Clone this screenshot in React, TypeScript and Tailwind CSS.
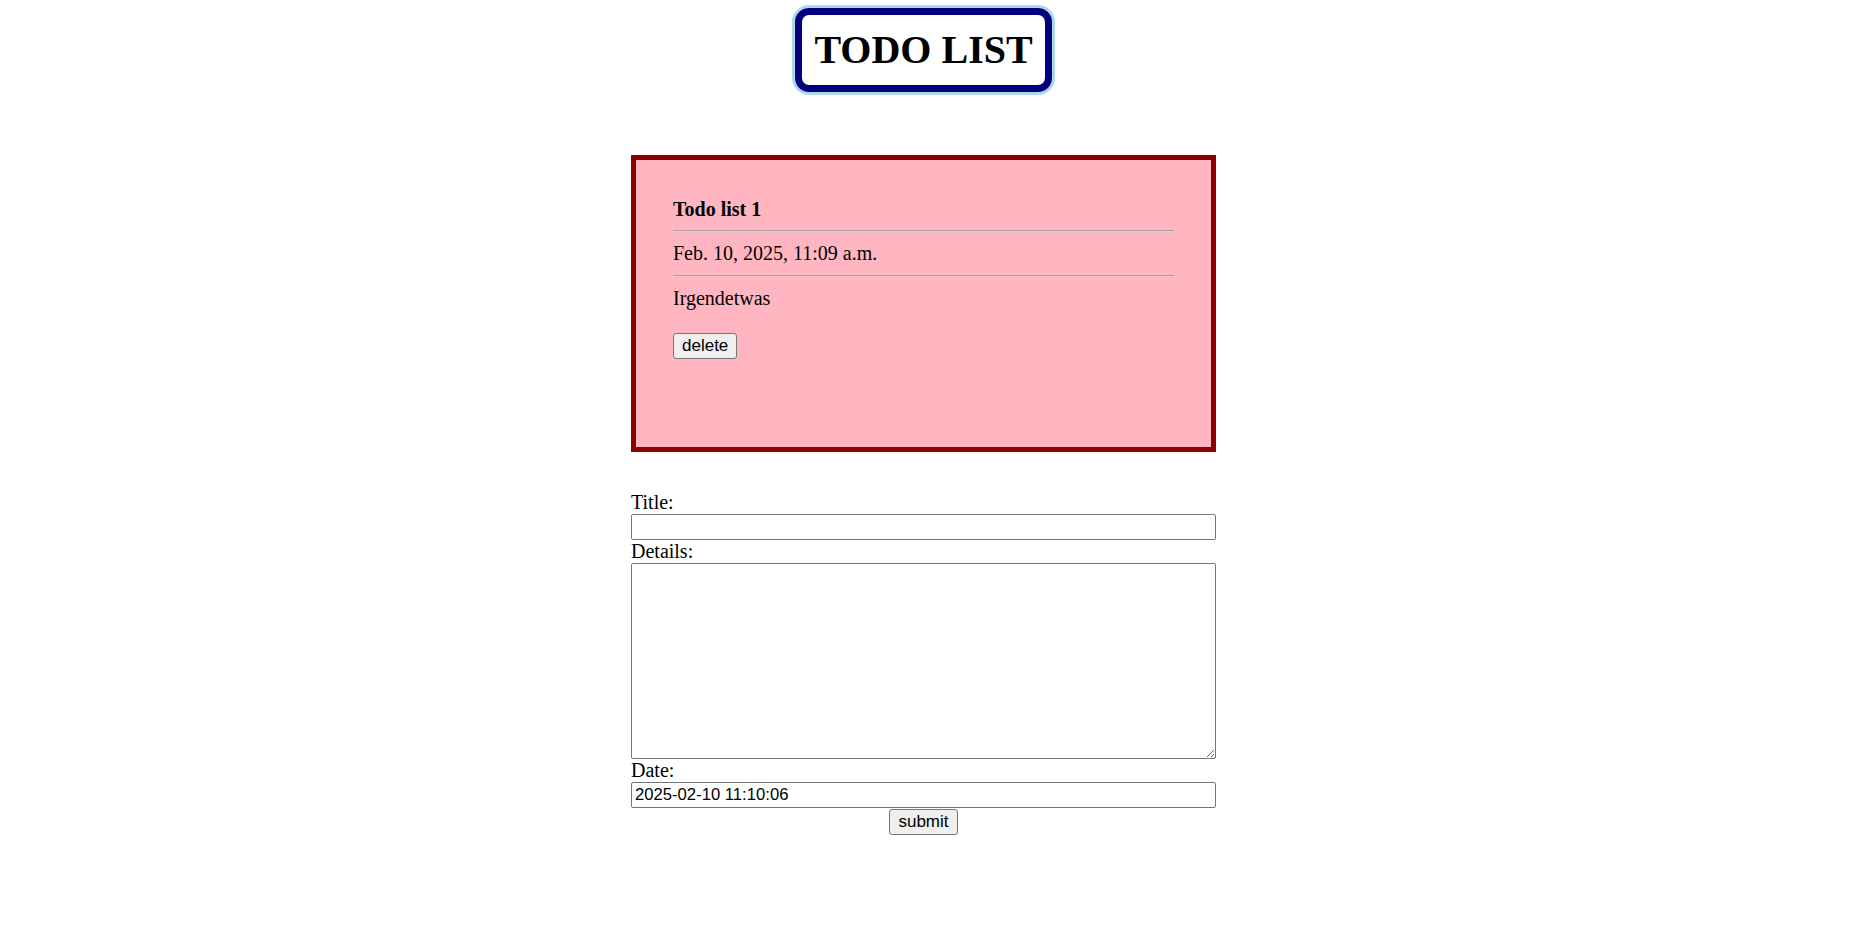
import React, { useState } from 'react';

type Todo = {
	id: number;
	title: string;
	date: string;
	details: string;
};

const serif = 'font-["Liberation_Serif","Times_New_Roman",serif]';
const sans = 'font-["Liberation_Sans",Arial,sans-serif]';

export default function App() {
	const [todos, setTodos] = useState<Todo[]>([
		{ id: 1, title: 'Todo list 1', date: 'Feb. 10, 2025, 11:09 a.m.', details: 'Irgendetwas' },
	]);
	const [title, setTitle] = useState('');
	const [details, setDetails] = useState('');
	const [date, setDate] = useState('2025-02-10 11:10:06');

	const handleSubmit = (e: React.FormEvent) => {
		e.preventDefault();
	};

	return (
		<div className={`w-[1847px] min-h-[926px] bg-white text-black flex flex-col items-center ${serif}`}>
			<h1 className="mt-[8px] border-[7px] border-[#000080] rounded-[14px] shadow-[0_0_0_3px_#add8e6] px-[12px] py-[12px] text-[40px] leading-[46px] font-bold">
				TODO LIST
			</h1>

			{todos.map(todo => (
				<div
					key={todo.id}
					className="mt-[63px] w-[585px] h-[297px] border-[5px] border-[#8b0000] bg-[#ffb6c1] pt-[38px] px-[37px] text-[20px] leading-[23px]"
				>
					<p className="font-bold">{todo.title}</p>
					<hr className="mt-[9px] mb-[10px] border-t border-b border-t-[#a0a0a0] border-b-[#f0c8ce]" />
					<p>{todo.date}</p>
					<hr className="mt-[10px] mb-[10px] border-t border-b border-t-[#a0a0a0] border-b-[#f0c8ce]" />
					<p>{todo.details}</p>
					<button
						type="button"
						onClick={() => setTodos(todos.filter(t => t.id !== todo.id))}
						className={`mt-[23px] h-[26px] px-[8px] border border-[#767676] rounded-[3px] bg-[#efefef] text-[17px] leading-[20px] ${sans}`}
					>
						delete
					</button>
				</div>
			))}

			<form onSubmit={handleSubmit} className="mt-[39px] w-[585px] flex flex-col text-[20px] leading-[23px]">
				<label>Title:</label>
				<input
					type="text"
					value={title}
					onChange={e => setTitle(e.target.value)}
					className={`h-[26px] border border-[#767676] rounded-[2px] px-[3px] text-[16.67px] ${sans}`}
				/>
				<label>Details:</label>
				<textarea
					value={details}
					onChange={e => setDetails(e.target.value)}
					className={`h-[196px] border border-[#767676] rounded-[2px] px-[3px] text-[16.67px] ${sans}`}
				/>
				<label>Date:</label>
				<input
					type="text"
					value={date}
					onChange={e => setDate(e.target.value)}
					className={`h-[26px] border border-[#767676] rounded-[2px] px-[3px] text-[16.67px] ${sans}`}
				/>
				<button
					type="submit"
					className={`self-center mt-[1px] h-[26px] px-[8px] border border-[#767676] rounded-[3px] bg-[#efefef] text-[17px] leading-[20px] ${sans}`}
				>
					submit
				</button>
			</form>
		</div>
	);
}
